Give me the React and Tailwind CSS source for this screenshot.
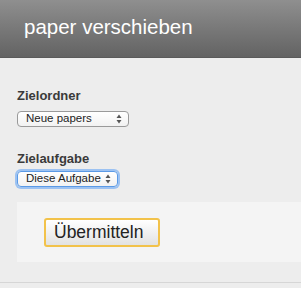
import React from 'react';

const Arrows = () => (
    <svg width="6" height="10" viewBox="0 0 6 10" className="shrink-0">
        <path d="M3 0.5 L5.5 4 L0.5 4 Z" fill="#555" />
        <path d="M3 9.5 L5.5 6 L0.5 6 Z" fill="#555" />
    </svg>
);

const FakeSelect = ({ label, width, focused }) => (
    <div
        className={`flex items-center justify-between h-[16px] pl-[8px] pr-[6px] rounded-[4px] bg-gradient-to-b from-white to-[#f2f2f2] border text-[11.5px] text-[#222] leading-none ${width} ${
            focused ? 'border-[#5b9ae6] ring-2 ring-[#9cc2f2]' : 'border-[#9a9a9a]'
        }`}
    >
        <span>{label}</span>
        <Arrows />
    </div>
);

const App = () => {
    return (
        <div className="w-[301px] h-[288px] bg-[#ededed] overflow-hidden" style={{ fontFamily: '"Liberation Sans", Arial, sans-serif' }}>
            {/* Kopfzeile */}
            <div className="h-[58px] bg-gradient-to-b from-[#8f8f8f] to-[#636363] border-b border-[#5a5a5a] flex items-center pl-[24px]">
                <h1 className="text-[20.5px] text-white leading-none pb-[2px]">paper verschieben</h1>
            </div>

            <div className="pl-[17px] pt-[31px]">
                <div className="text-[13px] font-bold text-[#3a3a3a] leading-none">Zielordner</div>
                <div className="mt-[9px]">
                    <FakeSelect label="Neue papers" width="w-[112px]" />
                </div>

                <div className="mt-[25px] text-[13px] font-bold text-[#3a3a3a] leading-none">Zielaufgabe</div>
                <div className="mt-[6px]">
                    <FakeSelect label="Diese Aufgabe" width="w-[101px]" focused />
                </div>

                <div className="mt-[15px] h-[60px] bg-[#f4f4f4] pl-[27px] pt-[16px]">
                    <button className="h-[29px] w-[116px] rounded-[3px] border-2 border-[#f2c24a] bg-gradient-to-b from-white to-[#e2e2e2] text-[17.5px] text-[#222] leading-none text-left pl-[8px]">
                        Übermitteln
                    </button>
                </div>
            </div>

            <div className="mt-[20px] border-b border-[#d6d6d6]" />
        </div>
    );
};

export default App;
